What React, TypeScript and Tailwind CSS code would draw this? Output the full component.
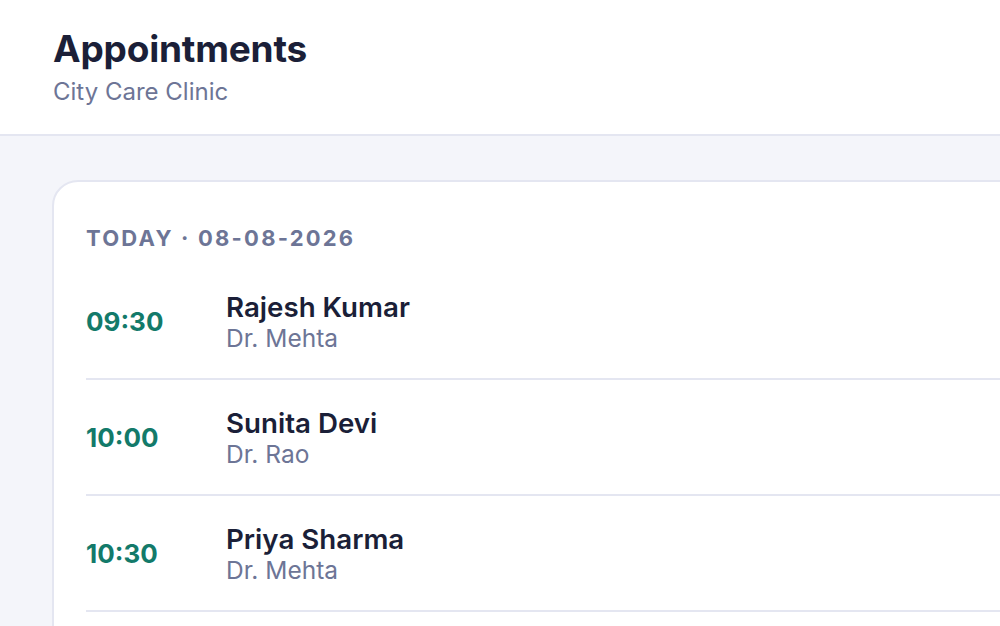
const appointments = [
  { time: "09:30", patient: "Rajesh Kumar", doctor: "Dr. Mehta" },
  { time: "10:00", patient: "Sunita Devi", doctor: "Dr. Rao" },
  { time: "10:30", patient: "Priya Sharma", doctor: "Dr. Mehta" },
];

export default function App() {
  return (
    <div className="h-[626px] w-full overflow-hidden bg-[#f4f5fa] font-['Inter',sans-serif]">
      <header className="h-[136px] border-b-2 border-[#e4e6f1] bg-white px-[53px] pt-[26px]">
        <h1 className="text-[37px] font-bold leading-[46px] tracking-[-0.2px] text-[#1b1f38]">
          Appointments
        </h1>
        <p className="mt-[4px] text-[24px] leading-[32px] text-[#6d7596]">City Care Clinic</p>
      </header>

      <main className="w-[1100px] pl-[52px] pt-[44px]">
        <section className="rounded-[26px] border-2 border-[#e4e6f1] bg-white pb-[48px] pl-[32px] pt-[42px]">
          <h2 className="text-[22px] font-bold uppercase leading-[28px] tracking-[2.2px] text-[#6d7596]">
            Today · 08-08-2026
          </h2>
          <ul className="mt-[12px]">
            {appointments.map((a) => (
              <li
                key={a.time}
                className="flex items-center border-b-2 border-[#e4e6f1] py-[26px]"
              >
                <span className="w-[140px] text-[26px] font-bold text-[#137a6a]">
                  {a.time}
                </span>
                <div className="flex flex-col">
                  <span className="text-[27.7px] font-semibold leading-[34px] text-[#1b1f38]">
                    {a.patient}
                  </span>
                  <span className="text-[24.5px] leading-[28px] text-[#6d7596]">
                    {a.doctor}
                  </span>
                </div>
              </li>
            ))}
          </ul>
        </section>
      </main>
    </div>
  );
}
